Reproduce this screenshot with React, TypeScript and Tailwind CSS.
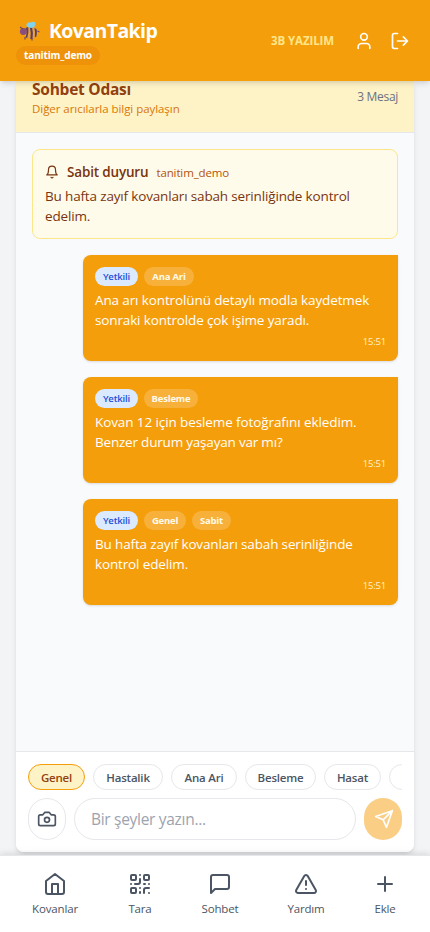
import React from "react";

const Icon = ({ size, className = "", sw = 2, children }: { size: number; className?: string; sw?: number; children: React.ReactNode }) => (
  <svg width={size} height={size} viewBox="0 0 24 24" fill="none" stroke="currentColor" strokeWidth={sw} strokeLinecap="round" strokeLinejoin="round" className={`block shrink-0 ${className}`}>
    {children}
  </svg>
);

const Bee = () => (
  <svg width="21" height="20" viewBox="0 0 21 20" className="block shrink-0">
    <ellipse cx="12" cy="11.500" rx="7" ry="6.500" fill="#e8a13c" />
    <path d="M6.500 7q2 4 0 9l1.700 1.300q2-6 1-11.300z" fill="#5f4062" />
    <path d="M10.800 6q1.500 5 .5 12l2.200 0q1-6-.5-12z" fill="#5a3c60" />
    <path d="M15.300 7q1.500 4 .5 9.500l1.700-1.300q1-4 0-7.200z" fill="#5a3c60" />
    <circle cx="4.300" cy="10.500" r="3.400" fill="#8a4f7c" />
    <path d="M1 6l3 2M6 16v2.500M13 17.500v2M18.500 10l2 1" stroke="#6f4866" strokeWidth="1.200" fill="none" />
    <path d="M7.500 5C7 2 10 .5 12 1.500C14-.5 18 1 15.500 5.500Q12 8.500 7.500 5" fill="#83d2ed" />
  </svg>
);

const Message = ({ lines, tags }: { lines: [string, string][]; tags: [string, string][] }) => (
  <article className="ml-auto h-[106px] w-[315px] shrink-0 rounded-lg rounded-tr-none bg-[#f59e0b] px-3 pt-3 text-white shadow-sm">
    <div className="mb-1 flex h-[19px] gap-1.5 text-[9.500px] font-bold">
      <span className="flex w-[43px] items-center justify-center rounded-full bg-[#dbeafe] pt-px font-semibold tracking-[-0.150px] text-[#1d4ed8]">Yetkili</span>
      {tags.map(([t, w]) => (
        <span key={t} className={`flex items-center justify-center rounded-full bg-white/20 pt-px tracking-[-0.200px] text-[#fffbeb] ${w}`}>{t}</span>
      ))}
    </div>
    <div className="whitespace-nowrap text-[13.500px] leading-5">
      {lines.map(([t, c]) => <p key={t}><span className={c}>{t}</span></p>)}
    </div>
    <p className="mt-1 text-right text-[9.500px] leading-[15px] tracking-[-0.200px] text-[#fef3c7]">15:51</p>
  </article>
);

const navItems: { label: string; place: string; icon: React.ReactNode }[] = [
  { label: "Kovanlar", place: "ml-[25px]", icon: <path d="m3 9 9-7 9 7v11a2 2 0 0 1-2 2H5a2 2 0 0 1-2-2zM9 22V12h6v10" /> },
  {
    label: "Tara",
    place: "ml-[25px]",
    icon: (
      <>
        <rect width="5" height="5" x="3" y="3" rx="1" />
        <rect width="5" height="5" x="16" y="3" rx="1" />
        <rect width="5" height="5" x="3" y="16" rx="1" />
        <path d="M21 16h-3a2 2 0 0 0-2 2v3M21 21v.01M12 7v3a2 2 0 0 1-2 2H7M3 12h.01M12 3h.01M12 16v.01M16 12h1M21 12v.01M12 21v-1" />
      </>
    ),
  },
  { label: "Sohbet", place: "ml-5", icon: <path d="M21 15a2 2 0 0 1-2 2H7l-4 4V5a2 2 0 0 1 2-2h14a2 2 0 0 1 2 2z" /> },
  { label: "Yardım", place: "ml-[26px]", icon: <path d="m21.730 18-8-14a2 2 0 0 0-3.480 0l-8 14A2 2 0 0 0 4 21h16a2 2 0 0 0 1.730-3M12 9v4M12 17h.01" /> },
  { label: "Ekle", place: "ml-[19px]", icon: <path d="M5 12h14M12 5v14" /> },
];

export default function App() {
  return (
    <div className="flex h-[932px] w-[430px] flex-col overflow-hidden bg-[#f3f4f6] font-['Open_Sans','Noto_Sans',sans-serif]">
      <header className="z-10 flex h-[81px] shrink-0 items-center justify-between bg-[#f59e0b] pl-4 pr-5 text-white shadow-md">
        <div>
          <div className="flex h-[28px] items-center">
            <div className="ml-[3px] mr-[9px]"><Bee /></div>
            <h1 className="text-[19.500px] font-bold leading-7 tracking-[-0.600px]">KovanTakip</h1>
          </div>
          <div className="mt-px flex h-[19px] w-[84px] items-center justify-center rounded-full bg-[#d97706]/30 text-[10px] font-bold tracking-[-0.150px]">tanitim_demo</div>
        </div>
        <div className="flex items-center">
          <span className="mr-[20px] text-[11.500px] font-bold tracking-[-0.100px] text-[#fde68a]">3B YAZILIM</span>
          <Icon size={20} className="mr-4"><path d="M19 21v-2a4 4 0 0 0-4-4H9a4 4 0 0 0-4 4v2" /><circle cx="12" cy="7" r="4" /></Icon>
          <Icon size={20}><path d="M9 21H5a2 2 0 0 1-2-2V5a2 2 0 0 1 2-2h4M16 17l5-5-5-5M21 12H9" /></Icon>
        </div>
      </header>

      <main className="mx-4 flex h-[771px] shrink-0 flex-col rounded-b-lg bg-white shadow-md">
        <div className="flex h-[52px] shrink-0 justify-between border-b border-[#e5e7eb] bg-[#fef3c7] px-4">
          <div className="whitespace-nowrap">
            <h2 className="text-[15.500px] font-bold leading-4 tracking-[-0.250px] text-[#92400e]">Sohbet Odası</h2>
            <p className="mt-1 text-[11.500px] leading-4 tracking-[-0.050px] text-[#d97706]">Diğer arıcılarla bilgi paylaşın</p>
          </div>
          <span className="mt-[6px] text-[12px] leading-5 tracking-[-0.300px] text-[#6b7280]">3 Mesaj</span>
        </div>

        <section className="flex h-[618px] shrink-0 flex-col gap-4 bg-[#f9fafb] p-4">
          <div className="h-[90px] shrink-0 rounded-lg border border-[#fde68a] bg-[#fffbeb] px-3 pt-3 text-[#78350f]">
            <div className="mb-1 flex h-5 items-center gap-2 whitespace-nowrap">
              <Icon size={14}><path d="M6 8a6 6 0 0 1 12 0c0 7 3 9 3 9H3s3-2 3-9M10.300 21a1.940 1.940 0 0 0 3.400 0" /></Icon>
              <b className="text-[13.500px] font-semibold tracking-[-0.170px]">Sabit duyuru</b>
              <span className="pt-px text-[11.500px] tracking-[-0.120px] text-[#b45309]">tanitim_demo</span>
            </div>
            <p className="whitespace-nowrap text-[13.500px] leading-5 tracking-[-0.160px]">Bu hafta zayıf kovanları sabah serinliğinde kontrol<br />edelim.</p>
          </div>
          <Message tags={[["Ana Ari", "w-[50px]"]]} lines={[["Ana arı kontrolünü detaylı modla kaydetmek", "tracking-[-0.120px]"], ["sonraki kontrolde çok işime yaradı.", "tracking-[-0.140px]"]]} />
          <Message tags={[["Besleme", "w-[54px]"]]} lines={[["Kovan 12 için besleme fotoğrafını ekledim.", "tracking-[-0.100px]"], ["Benzer durum yaşayan var mı?", "tracking-[-0.200px]"]]} />
          <Message tags={[["Genel", "w-[42px]"], ["Sabit", "w-[39px]"]]} lines={[["Bu hafta zayıf kovanları sabah serinliğinde", "tracking-[-0.150px]"], ["kontrol edelim.", "tracking-[-0.140px]"]]} />
        </section>

        <footer className="h-[101px] shrink-0 rounded-b-lg border-t border-[#e5e7eb] bg-white px-3 pt-3">
          <div className="mb-2 flex h-[26px] gap-2 overflow-hidden whitespace-nowrap text-[11.500px] font-semibold tracking-[-0.200px] text-[#4b5563]">
            {[["Genel", "w-[57px] border-[#f59e0b] bg-[#fef3c7] text-[#92400e]"], ["Hastalik", "w-[70px] border-[#e5e7eb]"], ["Ana Ari", "w-[66px] border-[#e5e7eb]"], ["Besleme", "w-[71px] border-[#e5e7eb]"], ["Hasat", "w-[57px] border-[#e5e7eb]"], ["", "w-[60px] border-[#e5e7eb]"]].map(([t, c], i) => (
              <button key={i} className={`flex shrink-0 items-center justify-center rounded-full border pt-px ${c}`}>{t}</button>
            ))}
          </div>
          <div className="flex h-[42px] gap-2">
            <button className="flex w-[38px] items-center justify-center rounded-full border border-[#e5e7eb] text-[#4b5563]">
              <Icon size={20}><path d="M14.500 4h-5L7 7H4a2 2 0 0 0-2 2v9a2 2 0 0 0 2 2h16a2 2 0 0 0 2-2V9a2 2 0 0 0-2-2h-3z" /><circle cx="12" cy="13" r="3" /></Icon>
            </button>
            <div className="flex w-[282px] items-center rounded-full border border-[#e5e7eb] px-4 pt-0.5 text-[15.500px] tracking-[-0.300px] text-[#9ca3af]">Bir şeyler yazın...</div>
            <button className="flex w-[38px] items-center justify-center rounded-full bg-[#f59e0b]/50 pl-0.5 text-white">
              <Icon size={20}><path d="M22 2 15 22 11 13 2 9ZM22 2 11 13" /></Icon>
            </button>
          </div>
        </footer>
      </main>

      <nav className="z-10 mt-[3px] flex h-[77px] shrink-0 items-start border-t border-[#e5e7eb] bg-white pt-4 text-[11.500px] tracking-[-0.150px] text-[#4b5563] shadow-[0_-2px_6px_rgba(0,0,0,0.1)]">
        {navItems.map(({ label, place, icon }) => (
          <a key={label} className={`flex w-[60px] shrink-0 flex-col items-center gap-1 ${place}`}>
            <Icon size={24}>{icon}</Icon>
            <span>{label}</span>
          </a>
        ))}
      </nav>
    </div>
  );
}
